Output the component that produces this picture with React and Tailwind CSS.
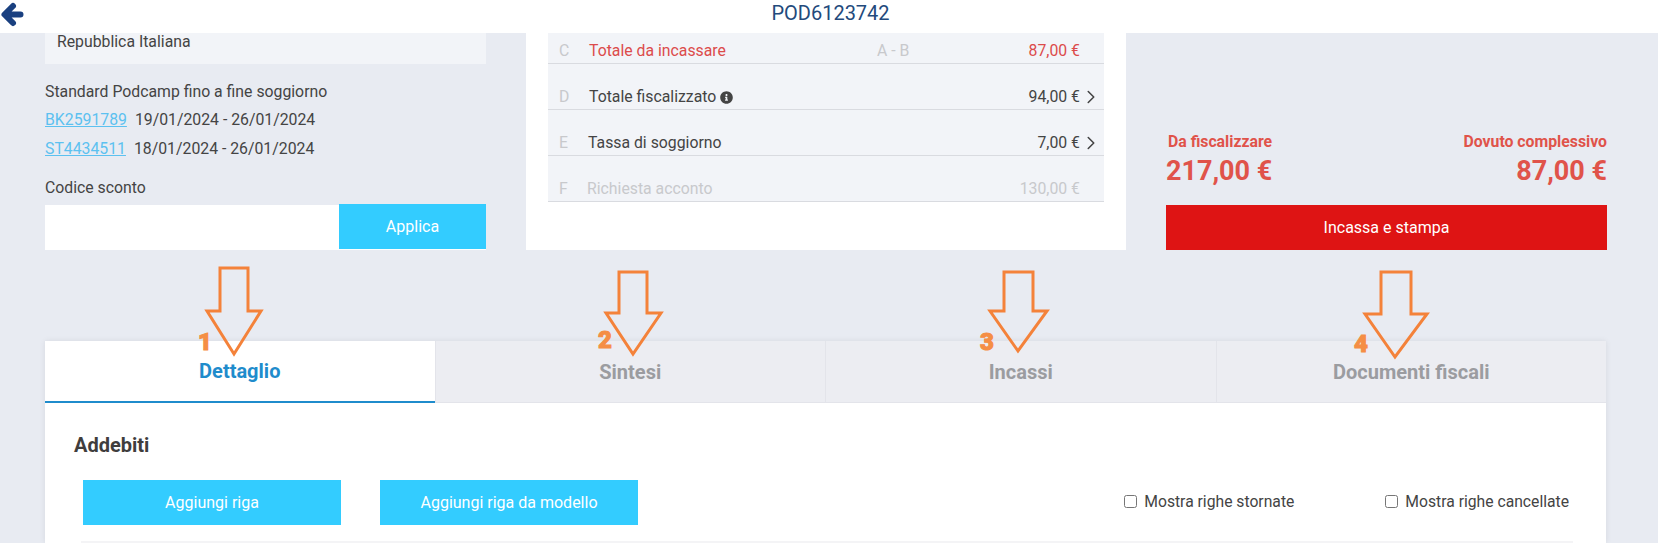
import React from 'react';
import { FaInfoCircle } from 'react-icons/fa';
import { ChevronRight } from 'lucide-react';

const rows = [
  { letter: 'C', label: 'Totale da incassare', formula: 'A - B', value: '87,00 €', color: 'text-[#dc4b4b]', labelClass: 'ml-[19px]' },
  { letter: 'D', label: 'Totale fiscalizzato', info: true, value: '94,00 €', chevron: true, color: 'text-[#444444]', labelClass: 'ml-[19px]' },
  { letter: 'E', label: 'Tassa di soggiorno', value: '7,00 €', chevron: true, color: 'text-[#444444]', labelClass: 'ml-[18px]' },
  { letter: 'F', label: 'Richiesta acconto', value: '130,00 €', color: 'text-[#c8c9cc]', labelClass: 'ml-[17px]' },
];

const tabs = ['Dettaglio', 'Sintesi', 'Incassi', 'Documenti fiscali'];

// orange arrows drawn on top of the screenshot
const arrows = [
  '220,268 248,268 248,311 261,311 234,354 207,311 220,311',
  '619,272 647,272 647,313 661,313 633,354 606,313 619,313',
  '1004,272 1033,272 1033,311 1047,311 1018,351 990,311 1004,311',
  '1381,272 1411,272 1411,314 1427,314 1395,357 1365,314 1381,314',
];

function SummaryRow({ row }) {
  return (
    <div className="flex h-[46px] items-end border-b border-[#d9dbe0] pb-[3px] pl-[11px] pr-[2px] text-[15.8px] leading-[18px]">
      <span className="w-[11px] shrink-0 text-[#c8c9cc]">{row.letter}</span>
      <span className={`flex w-[288px] shrink-0 items-center gap-[4px] ${row.labelClass} ${row.color}`}>
        {row.label}
        {row.info && <FaInfoCircle className="h-[13px] w-[13px] text-[#444444]" />}
      </span>
      {row.formula && <span className="text-[#c8c9cc]">{row.formula}</span>}
      <span className="ml-auto flex items-center">
        <span className={row.color}>{row.value}</span>
        <span className="-my-[2px] flex h-[22px] w-[22px] justify-end">
          {row.chevron && <ChevronRight className="h-[22px] w-[22px] text-[#444444]" strokeWidth={1.7} />}
        </span>
      </span>
    </div>
  );
}

export default function App() {
  return (
    <div className="relative h-[543px] w-full overflow-hidden bg-[#e8ebf2] font-['Roboto',sans-serif] text-[#444444]">
      <header className="relative flex h-[33px] items-center justify-center bg-white pb-[8px] pl-[3px]">
        <svg className="absolute left-0 top-0 text-[#1a4080]" width="26" height="28" viewBox="0 0 26 28" fill="none" stroke="currentColor" strokeWidth="6" strokeLinecap="round" strokeLinejoin="round">
          <path d="M13 6 L4.5 14.5 L13 23 M5 14.5 H20.5" />
        </svg>
        <span className="text-[20px] text-[#234a7c]">POD6123742</span>
      </header>

      <div className="flex h-[217px] gap-[40px] pl-[45px] pr-[51px]">
        <div className="flex w-[441px] flex-col">
          <div className="flex h-[31px] items-center bg-[#f2f4f8] pb-[14px] pl-[12px] text-[15.8px]">Repubblica Italiana</div>
          <p className="mt-[18px] text-[15.8px] leading-[20px]">Standard Podcamp fino a fine soggiorno</p>
          <p className="mt-[8px] text-[15.8px] leading-[20px]">
            <span className="mr-[8px] text-[#5cc1f0] underline">BK2591789</span>19/01/2024 - 26/01/2024
          </p>
          <p className="mt-[9px] text-[15.8px] leading-[20px]">
            <span className="mr-[8px] text-[#5cc1f0] underline">ST4434511</span>18/01/2024 - 26/01/2024
          </p>
          <p className="mt-[19px] text-[15.8px] leading-[20px]">Codice sconto</p>
          <div className="mt-[7px] flex h-[45px] bg-white">
            <div className="flex-1" />
            <button className="-mt-[1px] h-[45px] w-[147px] bg-[#33ccff] text-[16px] text-white">Applica</button>
          </div>
        </div>

        <div className="w-[600px] bg-white px-[22px]">
          <div className="bg-[#f2f4f8]">
            {rows.map((row, i) => (
              <div key={row.letter} className={i === 0 ? 'mt-[-15px]' : ''}>
                <SummaryRow row={row} />
              </div>
            ))}
          </div>
        </div>

        <div className="flex w-[441px] flex-col">
          <div className="mt-[100px] flex justify-between text-[#e0534a]">
            <div className="flex flex-col items-start">
              <span className="ml-[2px] text-[15.8px] font-bold leading-[18px]">Da fiscalizzare</span>
              <span className="mt-[5px] text-[27px] font-bold leading-[30px]">217,00 €</span>
            </div>
            <div className="flex flex-col items-end">
              <span className="text-[15.8px] font-bold leading-[18px]">Dovuto complessivo</span>
              <span className="mt-[5px] text-[27px] font-bold leading-[30px]">87,00 €</span>
            </div>
          </div>
          <button className="mt-[19px] h-[45px] bg-[#de1414] text-[16px] text-white">Incassa e stampa</button>
        </div>
      </div>

      <div className="ml-[45px] mr-[52px] mt-[91px] bg-white shadow-[0_0_6px_rgba(0,0,0,0.08)]">
        <div className="flex h-[62px] bg-[#ecedf2]">
          {tabs.map((tab, i) => (
            <div
              key={tab}
              className={`flex flex-1 items-center justify-center text-[20px] font-bold ${
                i === 0 ? 'border-b-2 border-[#1f8ccc] bg-white text-[#1f8ccc]' : 'border-b border-l border-[#e3e4ea] text-[#9b9ca0]'
              }`}
            >
              {tab}
            </div>
          ))}
        </div>
        <div className="h-[140px] pl-[29px] pr-[37px] pt-[30px]">
          <h2 className="text-[20px] font-bold leading-[24px] text-[#3f3d3d]">Addebiti</h2>
          <div className="mt-[23px] flex items-center">
            <button className="ml-[9px] h-[45px] w-[258px] bg-[#33ccff] text-[16px] text-white">Aggiungi riga</button>
            <button className="ml-[39px] h-[45px] w-[258px] bg-[#33ccff] text-[16px] text-white">Aggiungi riga da modello</button>
            <label className="mb-[2px] ml-auto flex items-center gap-[7px] text-[15.7px]">
              <input type="checkbox" className="h-[13px] w-[13px]" />
              Mostra righe stornate
            </label>
            <label className="mb-[2px] ml-[91px] flex items-center gap-[7px] text-[15.7px]">
              <input type="checkbox" className="h-[13px] w-[13px]" />
              Mostra righe cancellate
            </label>
          </div>
          <div className="-mr-[4px] ml-[7px] mt-[16px] h-[3px] bg-[#f4f4f6]" />
        </div>
      </div>

      <svg className="pointer-events-none absolute left-0 top-0" width="1658" height="543">
        {arrows.map((points) => (
          <polygon key={points} points={points} fill="none" stroke="#f4823a" strokeWidth="3" />
        ))}
      </svg>
      <span className="absolute left-[198px] top-[328px] text-[24px] font-black leading-[28px] text-[#f58e45] [-webkit-text-stroke:1px_#f58e45]">1</span>
      <span className="absolute left-[598px] top-[326px] text-[24px] font-black leading-[28px] text-[#f58e45] [-webkit-text-stroke:1px_#f58e45]">2</span>
      <span className="absolute left-[980px] top-[328px] text-[24px] font-black leading-[28px] text-[#f58e45] [-webkit-text-stroke:1px_#f58e45]">3</span>
      <span className="absolute left-[1354px] top-[330px] text-[24px] font-black leading-[28px] text-[#f58e45] [-webkit-text-stroke:1px_#f58e45]">4</span>
    </div>
  );
}
